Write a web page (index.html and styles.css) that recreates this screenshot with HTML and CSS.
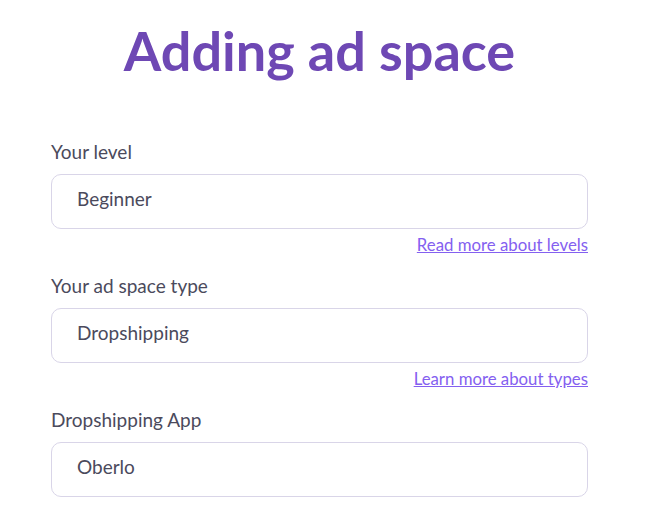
FILE: index.html
```html
<!DOCTYPE html>
<html lang="en">
<head>
<meta charset="utf-8">
<title>Adding ad space</title>
<link rel="stylesheet" href="styles.css">
</head>
<body>
<main class="page">
  <h1 class="title">Adding ad space</h1>
  <form class="form">
    <div class="field">
      <label class="label">Your level</label>
      <div class="input">Beginner</div>
      <div class="hint"><a class="link" href="#">Read more about levels</a></div>
    </div>
    <div class="field">
      <label class="label">Your ad space type</label>
      <div class="input">Dropshipping</div>
      <div class="hint"><a class="link" href="#">Learn more about types</a></div>
    </div>
    <div class="field">
      <label class="label">Dropshipping App</label>
      <div class="input">Oberlo</div>
    </div>
  </form>
</main>
</body>
</html>
```
FILE: styles.css
```css
html, body {
  margin: 0;
  padding: 0;
  background: #ffffff;
}
body {
  font-family: Lato, "Liberation Sans", sans-serif;
  color: #4b4a5c;
}
.page {
  width: 537px;
  margin-left: 51px;
  padding-top: 19px;
}
.title {
  margin: 0;
  font-size: 54px;
  line-height: 64px;
  font-weight: 700;
  color: #6e48b4;
  text-align: center;
}
.form {
  margin-top: 57px;
  display: flex;
  flex-direction: column;
  gap: 19px;
}
.field {
  display: flex;
  flex-direction: column;
}
.label {
  font-size: 19px;
  line-height: 24px;
  margin-bottom: 10px;
}
.input {
  box-sizing: border-box;
  height: 55px;
  border: 1px solid #d9d5e8;
  border-radius: 10px;
  padding: 0 25px 6px;
  display: flex;
  align-items: center;
  font-size: 19px;
}
.hint {
  margin-top: 6px;
  text-align: right;
  font-size: 16.8px;
  line-height: 20px;
}
.link {
  color: #8460f0;
  text-decoration: underline;
}
```
